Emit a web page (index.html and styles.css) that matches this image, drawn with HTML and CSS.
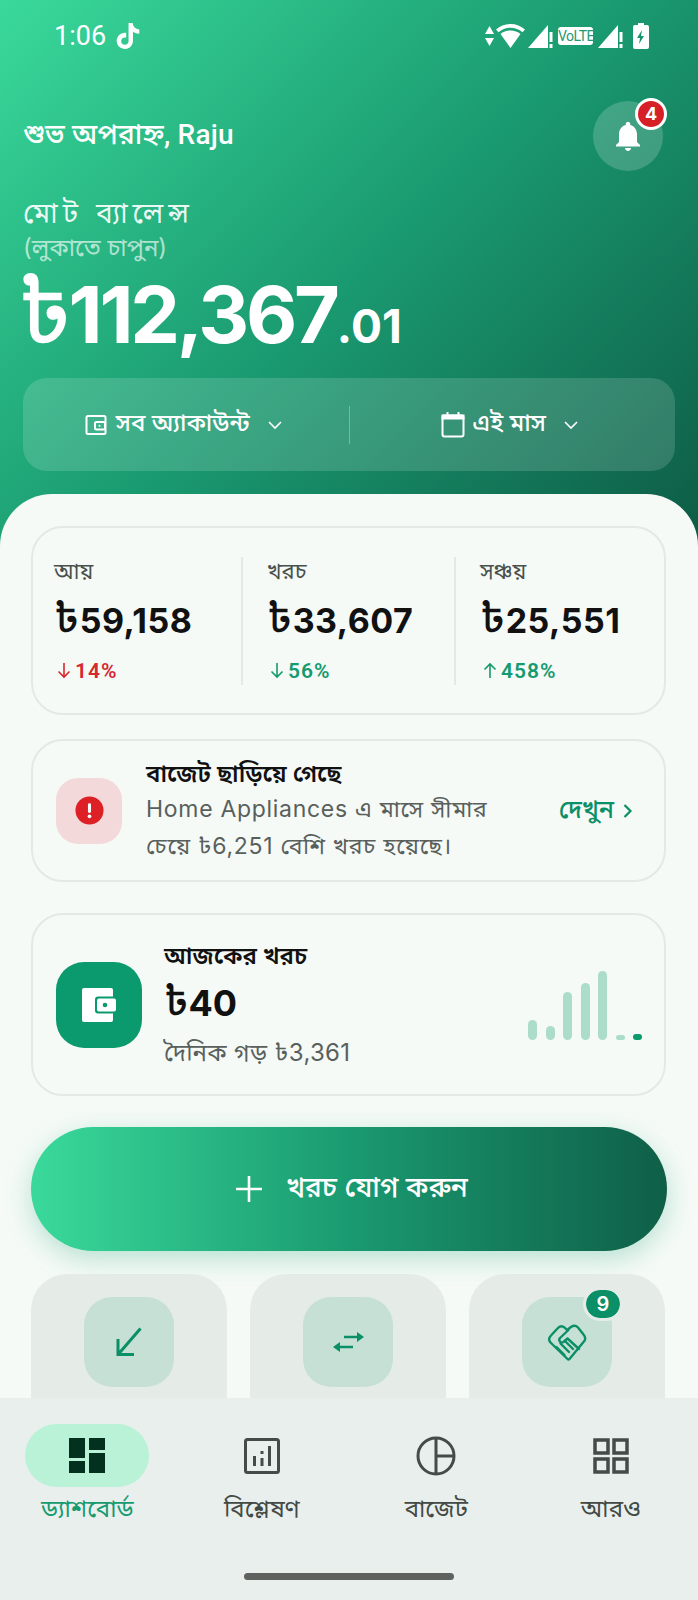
FILE: index.html
```html
<!DOCTYPE html>
<html lang="bn">
<head>
    <meta charset="UTF-8">
    <meta name="viewport" content="width=device-width, initial-scale=1.0">
    <link rel="stylesheet" href="styles.css">
    <title>ড্যাশবোর্ড</title>
</head>
<body>
<div class="screen">
    <main class="main">
        <header class="hero">
            <!-- Status bar -->
            <div class="status">
                <div class="status-left">
                    <span class="clock">1:06</span>
                    <svg class="tiktok" viewBox="0 0 24 24"><path fill="#fff" d="M12.525.02c1.31-.02 2.61-.01 3.91-.02.08 1.53.63 3.09 1.75 4.17 1.12 1.11 2.7 1.62 4.24 1.79v4.03c-1.44-.05-2.89-.35-4.2-.97-.57-.26-1.1-.59-1.62-.93-.01 2.92.01 5.84-.02 8.75-.08 1.4-.54 2.79-1.35 3.94-1.31 1.92-3.58 3.17-5.91 3.21-1.43.08-2.86-.31-4.08-1.03-2.02-1.19-3.44-3.37-3.65-5.71-.02-.5-.03-1-.01-1.49.18-1.9 1.12-3.72 2.58-4.96 1.66-1.44 3.98-2.13 6.15-1.72.02 1.48-.04 2.96-.04 4.44-.99-.32-2.15-.23-3.02.37-.63.41-1.11 1.04-1.36 1.75-.21.51-.15 1.07-.14 1.61.24 1.64 1.82 3.02 3.5 2.87 1.12-.01 2.19-.66 2.77-1.61.19-.33.4-.67.41-1.06.1-1.79.06-3.57.07-5.36.01-4.03-.01-8.05.02-12.07z"/></svg>
                </div>
                <div class="status-right">
                    <svg width="9" height="20" viewBox="0 0 9 20"><path fill="#fff" d="M4.500 0L9 8H0zM4.500 20L0 12h9z"/></svg>
                    <svg class="wifi" width="29" height="24" viewBox="0 0 29 24"><path fill="#fff" d="M14.500 0C9 0 4 2 0 5.500l2.500 2.800C5.800 5.500 10 3.800 14.500 3.800s8.700 1.700 12 4.500L29 5.500C25 2 20 0 14.500 0z"/><path fill="#fff" d="M14.500 6.500c-3.800 0-7.300 1.300-10 3.500l10 14 10-14c-2.700-2.200-6.200-3.500-10-3.500z"/></svg>
                    <svg width="25" height="24" viewBox="0 0 25 24"><path fill="#fff" d="M0 24L20 1v23z"/><path fill="#fff" d="M21.500 8h3v10h-3zM21.500 20h3v4h-3z"/></svg>
                    <span class="volte">VoLTE</span>
                    <svg width="25" height="24" viewBox="0 0 25 24"><path fill="#fff" d="M0 24L20 1v23z"/><path fill="#fff" d="M21.500 8h3v10h-3zM21.500 20h3v4h-3z"/></svg>
                    <svg class="batt" width="16" height="26" viewBox="0 0 16 26"><path fill="#fff" fill-rule="evenodd" d="M5 0h6v2h3a2 2 0 0 1 2 2v20a2 2 0 0 1-2 2H2a2 2 0 0 1-2-2V4a2 2 0 0 1 2-2h3zM9 7l-5 8h3l-1 6 5-8H8z"/></svg>
                </div>
            </div>

            <div class="greet-row">
                <div class="greet">শুভ অপরাহ্ন, Raju</div>
                <div class="bell">
                    <svg width="36" height="36" viewBox="0 0 24 24"><path fill="#fff" d="M12 22c1.100 0 2-.9 2-2h-4c0 1.100.9 2 2 2zm6-6v-5c0-3.070-1.640-5.640-4.500-6.320V4c0-.83-.67-1.500-1.500-1.500s-1.500.67-1.500 1.500v.68C7.630 5.360 6 7.920 6 11v5l-2 2v1h16v-1l-2-2z"/></svg>
                    <span class="bell-badge">4</span>
                </div>
            </div>

            <div class="bal-label">মোট ব্যালেন্স</div>
            <div class="bal-hint">(লুকাতে চাপুন)</div>
            <div class="bal-amount"><span class="tk">৳</span>112,367<small>.01</small></div>

            <div class="filters">
                <div class="filter">
                    <svg width="24" height="24" viewBox="0 0 24 24" fill="none" stroke="#fff" stroke-width="2"><rect x="2.500" y="3" width="19" height="18" rx="1.500"/><rect x="11" y="9" width="10" height="7.500" rx="1.500"/><circle cx="15.500" cy="12.700" r="1" fill="#fff" stroke="none"/></svg>
                    <span>সব অ্যাকাউন্ট</span>
                    <svg class="chev" width="18" height="18" viewBox="0 0 18 18" fill="none" stroke="#fff" stroke-width="1.600"><path d="M3 6l6 6 6-6"/></svg>
                </div>
                <div class="filter-sep"></div>
                <div class="filter">
                    <svg width="24" height="27" viewBox="0 0 24 27" fill="none" stroke="#fff" stroke-width="2"><rect x="1.500" y="4.500" width="21" height="21" rx="2"/><path fill="#fff" d="M1.500 4.500h21v3h-21z"/><path d="M6.500 1v4M17.500 1v4"/></svg>
                    <span>এই মাস</span>
                    <svg class="chev" width="18" height="18" viewBox="0 0 18 18" fill="none" stroke="#fff" stroke-width="1.600"><path d="M3 6l6 6 6-6"/></svg>
                </div>
            </div>
        </header>

        <section class="sheet">
            <!-- Income / expense / savings -->
            <div class="card stats">
                <div class="stat">
                    <div class="stat-label">আয়</div>
                    <div class="stat-value"><span class="tk">৳</span>59,158</div>
                    <div class="stat-delta red">
                        <svg width="14" height="17" viewBox="0 0 14 17" fill="none" stroke="currentColor" stroke-width="1.600"><path d="M7 1v14M1.500 9.500L7 15l5.500-5.500"/></svg>14%
                    </div>
                </div>
                <div class="stat">
                    <div class="stat-label">খরচ</div>
                    <div class="stat-value"><span class="tk">৳</span>33,607</div>
                    <div class="stat-delta green">
                        <svg width="14" height="17" viewBox="0 0 14 17" fill="none" stroke="currentColor" stroke-width="1.600"><path d="M7 1v14M1.500 9.500L7 15l5.500-5.500"/></svg>56%
                    </div>
                </div>
                <div class="stat">
                    <div class="stat-label">সঞ্চয়</div>
                    <div class="stat-value"><span class="tk">৳</span>25,551</div>
                    <div class="stat-delta green">
                        <svg width="14" height="17" viewBox="0 0 14 17" fill="none" stroke="currentColor" stroke-width="1.600"><path d="M7 16V2M1.500 7.500L7 2l5.500 5.500"/></svg>458%
                    </div>
                </div>
            </div>

            <!-- Budget alert -->
            <div class="card alert">
                <div class="alert-icon">
                    <svg width="29" height="29" viewBox="0 0 30 30"><circle cx="15" cy="15" r="14.500" fill="#dd2025"/><rect x="13.400" y="7.500" width="3.200" height="10" rx="1.500" fill="#fff"/><circle cx="15" cy="21" r="1.900" fill="#fff"/></svg>
                </div>
                <div class="alert-text">
                    <div class="alert-title">বাজেট ছাড়িয়ে গেছে</div>
                    <div class="alert-body">Home Appliances এ মাসে সীমার চেয়ে ৳6,251 বেশি খরচ হয়েছে।</div>
                </div>
                <div class="alert-link">দেখুন
                    <svg width="12" height="18" viewBox="0 0 12 18" fill="none" stroke="currentColor" stroke-width="2.200"><path d="M2.500 3l6 6-6 6"/></svg>
                </div>
            </div>

            <!-- Today's spending -->
            <div class="card today">
                <div class="today-icon">
                    <svg width="34" height="34" viewBox="0 0 34 34"><rect width="31" height="34" rx="2" fill="#fff"/><rect x="13" y="8.500" width="21" height="17" rx="3" fill="#0b9a6d"/><rect x="15" y="10.500" width="19" height="13" rx="2" fill="#fff"/><circle cx="23" cy="17" r="2.300" fill="#0b9a6d"/></svg>
                </div>
                <div class="today-text">
                    <div class="today-title">আজকের খরচ</div>
                    <div class="today-value"><span class="tk">৳</span>40</div>
                    <div class="today-avg">দৈনিক গড় ৳3,361</div>
                </div>
                <div class="bars">
                    <span class="bar" style="height:20px"></span>
                    <span class="bar" style="height:14px"></span>
                    <span class="bar" style="height:48px"></span>
                    <span class="bar" style="height:57px"></span>
                    <span class="bar" style="height:69px"></span>
                    <span class="bar" style="height:5px"></span>
                    <span class="bar now" style="height:6px"></span>
                </div>
            </div>

            <div class="add-btn">
                <svg width="26" height="26" viewBox="0 0 26 26" fill="none" stroke="#fff" stroke-width="2.600"><path d="M13 0v26M0 13h26"/></svg>
                <span>খরচ যোগ করুন</span>
            </div>

            <div class="tiles">
                <div class="tile">
                    <div class="tile-icon">
                        <svg width="28" height="30" viewBox="0 0 28 30" fill="none" stroke="#0b8f66" stroke-width="3"><path d="M25.500 1.500L3.500 27M3 12v15.500h16"/></svg>
                    </div>
                </div>
                <div class="tile">
                    <div class="tile-icon">
                        <svg width="31" height="20" viewBox="0 0 31 20" fill="none" stroke="#0b8f66" stroke-width="2.600"><path d="M11 5h15M5 15h15"/><path fill="#0b8f66" stroke="none" d="M24 0l7 5-7 5zM7 10l-7 5 7 5z"/></svg>
                    </div>
                </div>
                <div class="tile">
                    <div class="tile-icon">
                        <svg width="40" height="37" viewBox="0 0 40 37" fill="none" stroke="#0b8f66" stroke-width="2.400" stroke-linejoin="round" stroke-linecap="round"><path d="M20.500 35L4 19c-2.500-2.500-2.500-5 0-7.500L10 5c2.500-3 5-3.500 7.500-1.500L20 6l4-3c3-2 5-1.500 7 .5l5.500 7c2.500 3 2 5.500 0 7.500L22.500 35c-.7.7-1.300.7-2 0z"/><path d="M21.500 6L13 14c-2 2.500.5 5.500 3.500 4l4-3.500L32 25"/><path d="M9.500 23l8 8M13.500 19.500l8.500 8.500M18 17l8 8"/></svg>
                    </div>
                    <span class="tile-badge">9</span>
                </div>
            </div>
        </section>
    </main>

    <!-- Bottom navigation -->
    <nav class="nav">
        <div class="nav-item active">
            <div class="nav-pill">
                <svg width="36" height="35" viewBox="0 0 36 35"><path fill="#04301f" d="M0 0h16v20H0zM0 23h16v12H0zM20 0h16v12H20zM20 15h16v20H20z"/></svg>
            </div>
            <span>ড্যাশবোর্ড</span>
        </div>
        <div class="nav-item">
            <div class="nav-pill">
                <svg width="36" height="36" viewBox="0 0 36 36" fill="none" stroke="#444b48" stroke-width="3"><rect x="1.500" y="1.500" width="33" height="33" rx="2"/><path fill="#444b48" stroke="none" d="M9 18h3v10H9zM16.500 20h3v8h-3zM16.500 13h3v3h-3zM24 8h3v20h-3z"/></svg>
            </div>
            <span>বিশ্লেষণ</span>
        </div>
        <div class="nav-item">
            <div class="nav-pill">
                <svg width="40" height="40" viewBox="0 0 40 40" fill="none" stroke="#444b48" stroke-width="3"><circle cx="20" cy="20" r="18"/><path d="M20 2v36M20 20h18"/></svg>
            </div>
            <span>বাজেট</span>
        </div>
        <div class="nav-item">
            <div class="nav-pill">
                <svg width="36" height="36" viewBox="0 0 36 36" fill="none" stroke="#444b48" stroke-width="3.500"><path d="M2 2h13v13H2zM21 2h13v13H21zM2 21h13v13H2zM21 21h13v13H21z"/></svg>
            </div>
            <span>আরও</span>
        </div>
        <div class="home-bar"></div>
    </nav>
</div>
</body>
</html>
```

FILE: styles.css
```css
* {
    box-sizing: border-box;
}
body {
    margin: 0;
    font-family: 'Inter', 'Noto Sans', 'Noto Sans Bengali', 'Lohit Bengali', sans-serif;
    color: #111;
}
.screen {
    width: 698px;
    height: 1600px;
    display: flex;
    flex-direction: column;
    overflow: hidden;
    background: #f5faf7;
}
.main {
    height: 1398px;
    overflow: hidden;
}
/* the taka sign comes out smaller and lighter than the digits in the real app */
.tk {
    font-size: 1.14em;
    font-weight: 500;
    line-height: 0;
}

/* Header */
.hero {
    height: 560px;
    padding: 0 23px;
    color: #fff;
    background: linear-gradient(135deg, #3ad99b 0%, #1a9a70 50%, #0d5a44 100%);
}
.status {
    height: 72px;
    display: flex;
    align-items: center;
    justify-content: space-between;
    padding: 0 26px 0 31px;
}
.status-left {
    display: flex;
    align-items: center;
    gap: 9px;
}
.clock {
    font-size: 27px;
    font-family: 'Roboto', sans-serif;
}
.tiktok {
    width: 26px;
    height: 28px;
}
.status-right {
    display: flex;
    align-items: center;
    gap: 3px;
}
.wifi {
    margin-left: -1px;
}
.volte {
    width: 35px;
    margin: 0 2px;
    font-family: 'Roboto', sans-serif;
    font-size: 14px;
    line-height: 18px;
    letter-spacing: -0.5px;
    text-align: center;
    background: #fff;
    color: #1f9a72;
    border-radius: 3px;
}
.batt {
    margin-left: 7px;
}
.greet-row {
    height: 70px;
    margin-top: 29px;
    display: flex;
    align-items: center;
    justify-content: space-between;
    padding-right: 12px;
}
.greet {
    font-family: 'Roboto', 'Noto Sans', 'Noto Sans Bengali', sans-serif;
    font-size: 28px;
    font-weight: 500;
    letter-spacing: 0.2px;
}
.bell {
    position: relative;
    width: 70px;
    height: 70px;
    border-radius: 50%;
    background: rgba(255, 255, 255, 0.18);
    display: flex;
    align-items: center;
    justify-content: center;
}
.bell-badge {
    position: absolute;
    top: -3px;
    right: -4px;
    width: 32px;
    height: 32px;
    border: 3px solid #fff;
    border-radius: 50%;
    background: #d61f26;
    font-size: 18px;
    font-weight: 700;
    line-height: 26px;
    text-align: center;
}
.bal-label {
    margin-top: 25px;
    font-size: 28px;
    letter-spacing: 5px;
    line-height: 34px;
    color: rgba(255, 255, 255, 0.92);
}
.bal-hint {
    margin-top: 3px;
    font-size: 24px;
    line-height: 30px;
    color: rgba(255, 255, 255, 0.65);
}
.bal-amount {
    font-size: 79px;
    font-weight: 700;
    letter-spacing: -3.200px;
    line-height: 94px;
    margin-top: 4px;
}
.bal-amount small {
    font-size: 46px;
    font-weight: 700;
    letter-spacing: 0;
}
.bal-amount .tk {
    margin-left: -5px;
}
.filters {
    margin-top: 5px;
    height: 93px;
    display: flex;
    align-items: center;
    background: rgba(255, 255, 255, 0.15);
    border-radius: 24px;
}
.filter {
    flex: 1;
    display: flex;
    align-items: center;
    justify-content: center;
    gap: 8px;
    padding-right: 4px;
    font-size: 24px;
    font-weight: 500;
}
.filter .chev {
    margin-left: 8px;
}
.filter-sep {
    width: 1px;
    height: 38px;
    background: rgba(255, 255, 255, 0.3);
}

/* Sheet */
.sheet {
    margin-top: -66px;
    padding: 32px 32px 0 31px;
    background: #f5faf7;
    border-radius: 52px 52px 0 0;
    position: relative;
}
.card {
    border: 2px solid #e3e9e5;
    border-radius: 32px;
}
.stats {
    height: 189px;
    display: grid;
    grid-template-columns: 187px 213px 1fr;
    align-items: center;
    padding-left: 21px;
}
.stat {
    height: 128px;
    padding-left: 24px;
    border-left: 2px solid #e3e9e5;
}
.stat:first-child {
    border-left: none;
    padding-left: 0;
}
.stat-label {
    font-size: 22px;
    line-height: 28px;
    color: #49504c;
}
.stat-value {
    margin-top: 11px;
    font-size: 34px;
    font-weight: 700;
    line-height: 50px;
    letter-spacing: 0.5px;
    white-space: nowrap;
}
.stat-value .tk {
    font-size: 1.24em;
}
.stat-delta {
    margin-top: 11px;
    padding-left: 3px;
    display: flex;
    align-items: center;
    gap: 4px;
    font-family: 'Roboto', sans-serif;
    font-size: 21px;
    font-weight: 600;
    line-height: 28px;
    letter-spacing: 1px;
}
.red {
    color: #d6282e;
}
.green {
    color: #169a70;
}
.alert {
    margin-top: 24px;
    height: 143px;
    display: flex;
    align-items: center;
    padding: 0 30px 0 23px;
}
.alert-icon {
    width: 66px;
    height: 66px;
    flex-shrink: 0;
    border-radius: 22px;
    background: #f3d9d9;
    display: flex;
    align-items: center;
    justify-content: center;
}
.alert-text {
    width: 372px;
    margin-left: 24px;
}
.alert-title {
    font-size: 24px;
    font-weight: 600;
    line-height: 34px;
}
.alert-body {
    font-size: 23px;
    line-height: 37px;
    letter-spacing: 0.7px;
    color: #59605c;
}
.alert-link {
    margin-left: auto;
    display: flex;
    align-items: center;
    gap: 8px;
    font-size: 25px;
    font-weight: 500;
    color: #0b8f66;
    white-space: nowrap;
}
.today {
    margin-top: 31px;
    height: 183px;
    display: flex;
    align-items: center;
    padding: 0 22px 0 23px;
}
.today-icon {
    width: 86px;
    height: 86px;
    flex-shrink: 0;
    border-radius: 28px;
    background: #0b9a6d;
    display: flex;
    align-items: center;
    justify-content: center;
}
.today-text {
    margin-left: 22px;
}
.today-title {
    font-size: 24px;
    font-weight: 600;
    line-height: 36px;
}
.today-value {
    margin-top: 2px;
    font-size: 36px;
    font-weight: 700;
    line-height: 54px;
}
.today-avg {
    margin-top: 5px;
    font-size: 24px;
    line-height: 36px;
    letter-spacing: 0.3px;
    color: #59605c;
}
.bars {
    margin-left: auto;
    height: 69px;
    margin-top: 1px;
    display: flex;
    align-items: flex-end;
    gap: 8.500px;
}
.bar {
    width: 9px;
    border-radius: 5px;
    background: #acdcca;
}
.bar.now {
    background: #0b9a6d;
}
.add-btn {
    margin: 31px -1px 0 0;
    height: 124px;
    padding-left: 6px;
    border-radius: 62px;
    display: flex;
    align-items: center;
    justify-content: center;
    gap: 24px;
    color: #fff;
    font-size: 28px;
    font-weight: 500;
    background: linear-gradient(90deg, #3ad99b, #1a9a70 50%, #0f5f47);
    box-shadow: 0 8px 26px rgba(30, 160, 115, 0.28);
}
.tiles {
    margin-top: 23px;
    display: grid;
    grid-template-columns: repeat(3, 196px);
    gap: 23px;
}
.tile {
    position: relative;
    height: 170px;
    padding-top: 23px;
    border-radius: 36px;
    background: #e5ece7;
}
.tile-icon {
    width: 90px;
    height: 90px;
    margin: 0 auto;
    border-radius: 28px;
    background: #c6e0d6;
    display: flex;
    align-items: center;
    justify-content: center;
}
.tile-badge {
    position: absolute;
    top: 16px;
    right: 45px;
    width: 34px;
    height: 28px;
    border-radius: 14px;
    background: #0b8f66;
    outline: 3px solid #e5ece7;
    color: #fff;
    font-size: 20px;
    font-weight: 600;
    line-height: 28px;
    text-align: center;
}

/* Bottom nav */
.nav {
    position: relative;
    flex: 1;
    display: grid;
    grid-template-columns: repeat(4, 1fr);
    align-content: start;
    padding-top: 26px;
    background: #e9efec;
}
.nav-item {
    display: flex;
    flex-direction: column;
    align-items: center;
    font-size: 24px;
    line-height: 34px;
    color: #434a46;
}
.nav-item.active {
    color: #169a70;
}
.nav-pill {
    width: 124px;
    height: 63px;
    margin-bottom: 5px;
    border-radius: 32px;
    display: flex;
    align-items: center;
    justify-content: center;
}
.active .nav-pill {
    background: #b9f2d7;
}
.home-bar {
    position: absolute;
    left: 244px;
    bottom: 20px;
    width: 210px;
    height: 7px;
    border-radius: 4px;
    background: #5f625f;
}
```
